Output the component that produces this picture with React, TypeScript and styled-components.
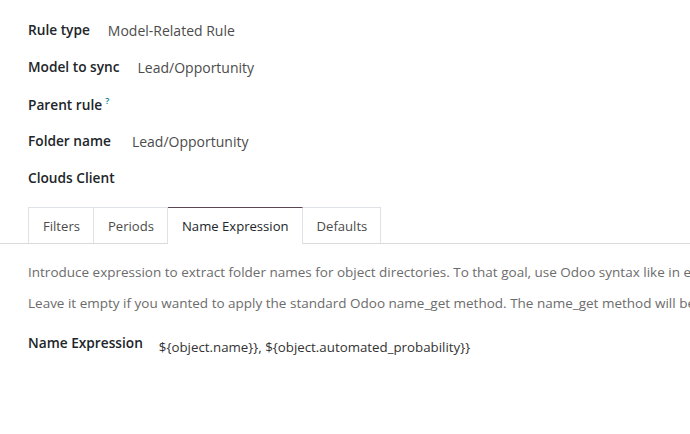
import React from "react";
import styled, { createGlobalStyle } from "styled-components";

const GlobalStyle = createGlobalStyle`
  html, body {
    margin: 0;
    padding: 0;
    background: #ffffff;
  }
  body {
    font-family: "Open Sans", "Noto Sans", sans-serif;
    color: #212529;
    overflow: hidden;
  }
`;

const Sheet = styled.div`
  width: 690px;
  height: 434px;
  overflow: hidden;
  display: flex;
  flex-direction: column;
`;

const FieldGroup = styled.div`
  display: flex;
  flex-direction: column;
  padding: 15px 0 0 28px;
`;

const FieldRow = styled.div`
  display: flex;
  align-items: center;
  height: 37px;
  white-space: nowrap;
`;

const Label = styled.span<{ $gap?: number }>`
  font-size: 13.7px;
  font-weight: 600;
  color: #212529;
  margin-right: ${(p) => p.$gap ?? 18}px;
  position: relative;
  top: -4px;
`;

const Value = styled.span`
  font-size: 14px;
  color: #4c4c4c;
  position: relative;
  top: -3px;
`;

const Help = styled.sup`
  font-size: 9px;
  font-weight: 600;
  color: #017e84;
  margin-left: 3px;
`;

const TabBar = styled.div`
  display: flex;
  margin-top: 7px;
  padding-left: 28px;
  border-bottom: 1px solid #d8dadd;
`;

const Tab = styled.div<{ $active?: boolean }>`
  padding: 0 13px 0 14px;
  display: flex;
  align-items: center;
  font-size: 13.1px;
  color: ${(p) => (p.$active ? "#212529" : "#4c4c4c")};
  background: #ffffff;
  border: 1px solid #dee2e6;
  border-top-color: ${(p) => (p.$active ? "#5a4650" : "#dee2e6")};
  border-bottom: none;
  margin-bottom: ${(p) => (p.$active ? "-1px" : "0")};
  height: ${(p) => (p.$active ? "36px" : "35px")};
  & + & {
    border-left: none;
  }
`;

const TabPanel = styled.div`
  padding: 19px 0 0 28px;
  white-space: nowrap;
  overflow: hidden;
`;

const Note = styled.p`
  margin: 0 0 13px;
  font-size: 13.5px;
  line-height: 18px;
  color: #6c6c6c;
`;

const ExprRow = styled.div`
  display: flex;
  align-items: center;
  margin-top: 25px;
`;

const ExprValue = styled.span`
  font-size: 13.3px;
  color: #333333;
`;

const fields: { label: string; value?: string; gap?: number; help?: boolean }[] = [
  { label: "Rule type", value: "Model-Related Rule" },
  { label: "Model to sync", value: "Lead/Opportunity" },
  { label: "Parent rule", help: true },
  { label: "Folder name", value: "Lead/Opportunity", gap: 21 },
  { label: "Clouds Client" },
];

const tabs = ["Filters", "Periods", "Name Expression", "Defaults"];

const App: React.FC = () => {
  return (
    <>
      <GlobalStyle />
      <Sheet>
        <FieldGroup>
          {fields.map((f) => (
            <FieldRow key={f.label}>
              <Label $gap={f.gap}>
                {f.label}
                {f.help && <Help>?</Help>}
              </Label>
              {f.value && <Value>{f.value}</Value>}
            </FieldRow>
          ))}
        </FieldGroup>
        <TabBar>
          {tabs.map((t) => (
            <Tab key={t} $active={t === "Name Expression"}>
              {t}
            </Tab>
          ))}
        </TabBar>
        <TabPanel>
          <Note>
            Introduce expression to extract folder names for object directories. To that goal, use Odoo syntax like in email templates
          </Note>
          <Note>
            Leave it empty if you wanted to apply the standard Odoo name_get method. The name_get method will be used for folder names
          </Note>
          <ExprRow>
            <Label $gap={16}>Name Expression</Label>
            <ExprValue>{"${object.name}}, ${object.automated_probability}}"}</ExprValue>
          </ExprRow>
        </TabPanel>
      </Sheet>
    </>
  );
};

export default App;
